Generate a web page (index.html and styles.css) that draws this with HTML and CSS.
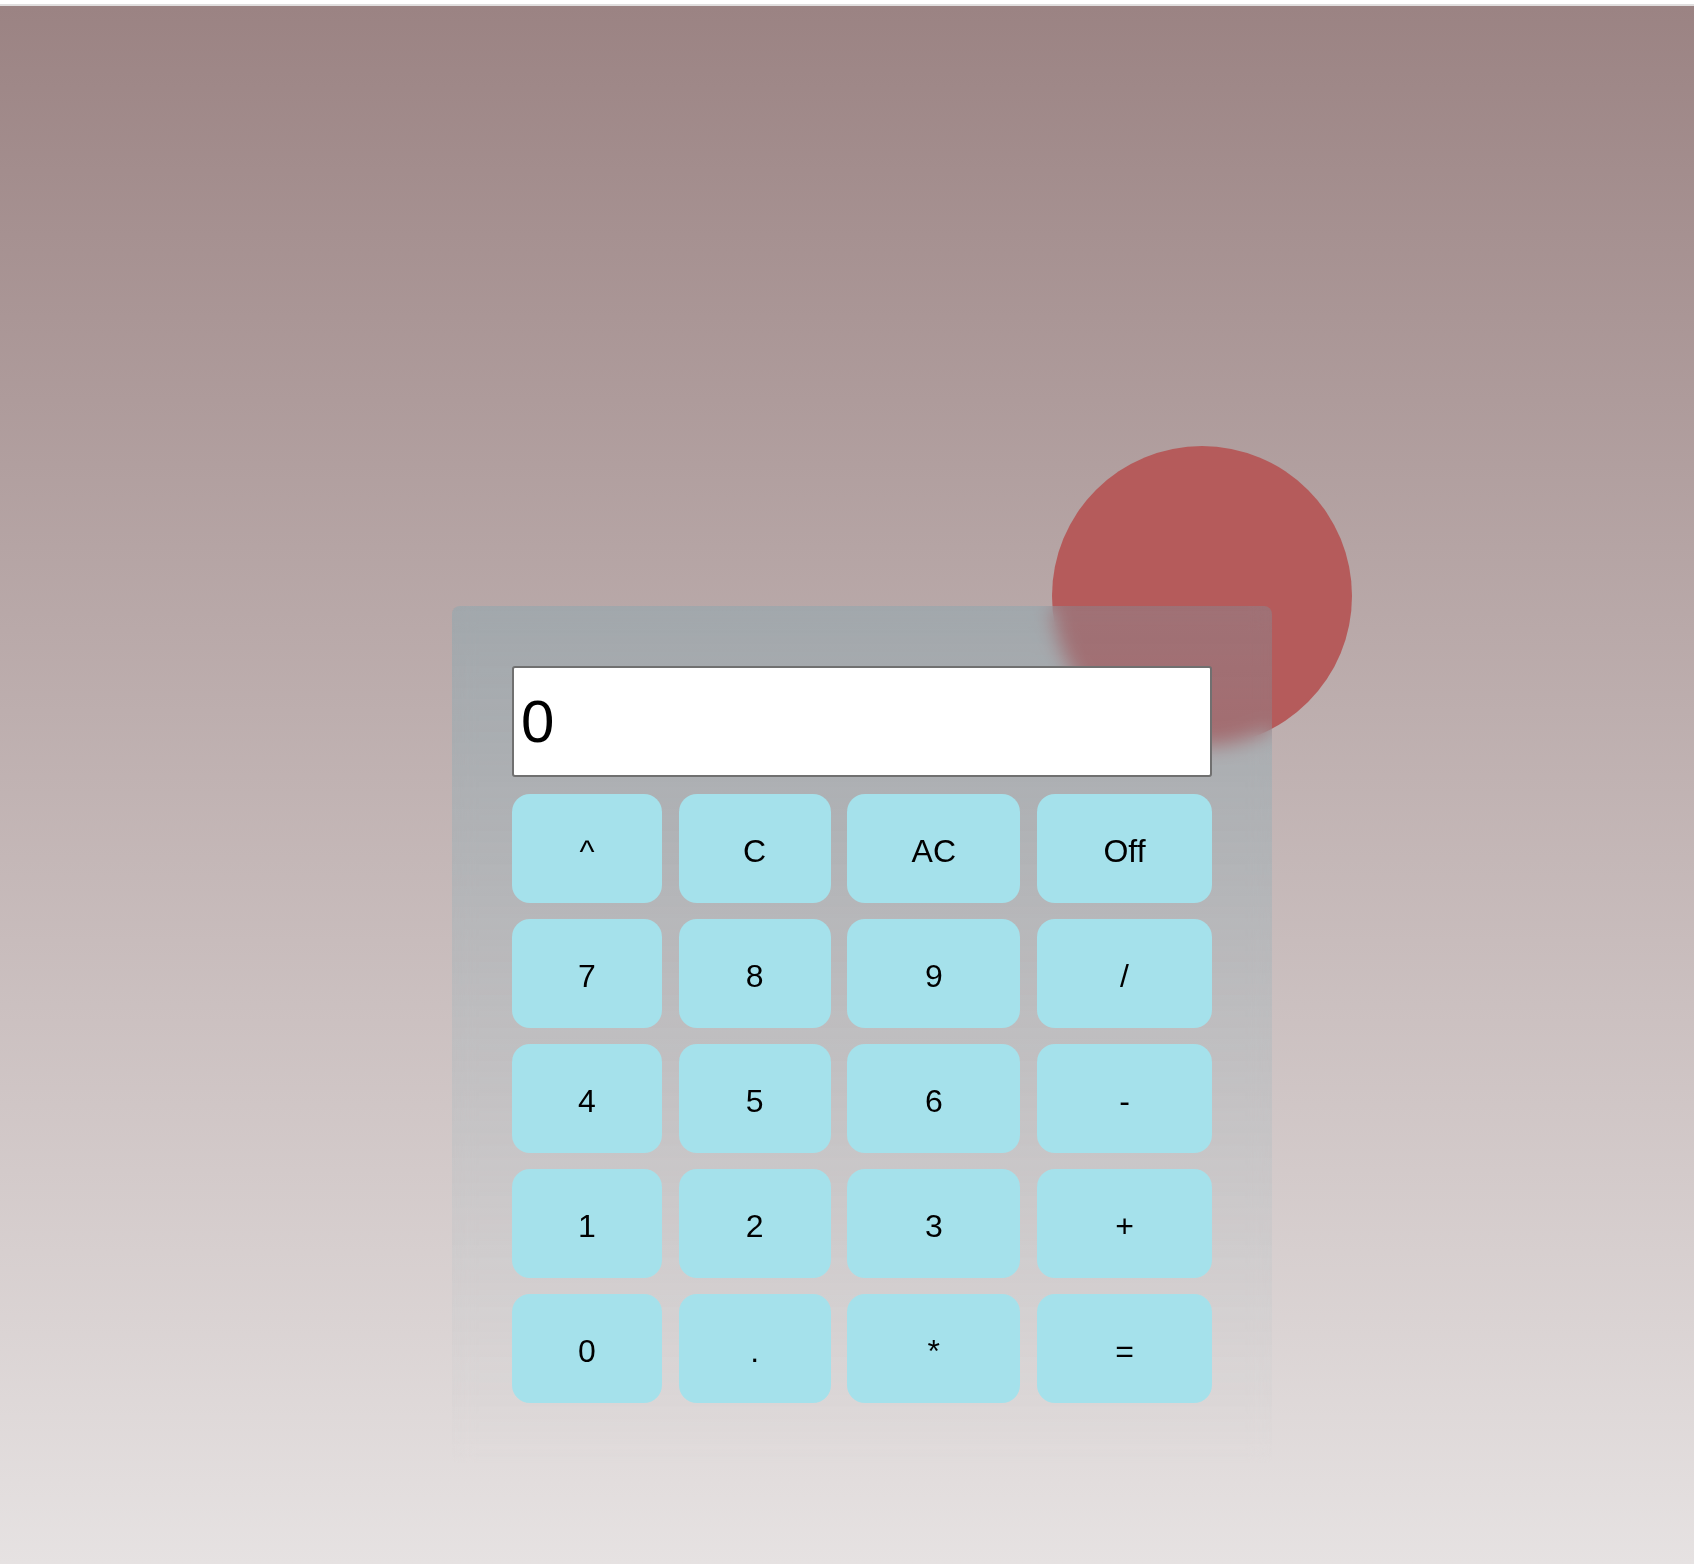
FILE: index.html
```html
<!DOCTYPE html>
<html lang="en">
<head>
<meta charset="utf-8">
<title>Calculator</title>
<link rel="stylesheet" href="styles.css">
</head>
<body>
<div class="topline"></div>
<main class="page">
  <div class="stage">
    <div class="orb"></div>
    <div class="calc">
      <div class="display">0</div>
      <div class="keys">
        <button class="key">^</button>
        <button class="key">C</button>
        <button class="key">AC</button>
        <button class="key">Off</button>
        <button class="key">7</button>
        <button class="key">8</button>
        <button class="key">9</button>
        <button class="key">/</button>
        <button class="key">4</button>
        <button class="key">5</button>
        <button class="key">6</button>
        <button class="key">-</button>
        <button class="key">1</button>
        <button class="key">2</button>
        <button class="key">3</button>
        <button class="key">+</button>
        <button class="key">0</button>
        <button class="key">.</button>
        <button class="key">*</button>
        <button class="key">=</button>
      </div>
    </div>
  </div>
</main>
</body>
</html>
```

FILE: styles.css
```css
html, body {
  margin: 0;
  padding: 0;
}
body {
  background: #ffffff;
  font-family: "Liberation Sans", Arial, sans-serif;
  overflow: hidden;
}
.topline {
  height: 4px;
  background: #ffffff;
  border-bottom: 2px solid #e0dede;
}
.page {
  height: 1558px;
  box-sizing: border-box;
  padding-top: 600px;
  padding-left: 452px;
  background: linear-gradient(180deg, #9b8383 0%, #e6e2e2 100%);
  overflow: hidden;
}
.stage {
  position: relative;
  width: 820px;
}
.orb {
  position: absolute;
  left: 600px;
  top: -160px;
  width: 300px;
  height: 300px;
  border-radius: 50%;
  background: #b55b5b;
}
.calc {
  position: relative;
  width: 820px;
  box-sizing: border-box;
  padding: 60px;
  border-radius: 8px;
  background: linear-gradient(180deg, rgba(108, 168, 183, 0.29) 0%, rgba(108, 168, 183, 0.12) 55%, rgba(108, 168, 183, 0) 100%);
  backdrop-filter: blur(10px);
  -webkit-backdrop-filter: blur(10px);
}
.display {
  height: 111px;
  box-sizing: border-box;
  border: 2px solid #707070;
  border-radius: 3px;
  background: #ffffff;
  display: flex;
  align-items: center;
  padding-left: 7px;
  font-size: 60px;
  color: #000;
  margin-bottom: 17px;
}
.keys {
  display: grid;
  grid-template-columns: 150px 152px 173px 175px;
  grid-auto-rows: 109px;
  column-gap: 16.67px;
  row-gap: 16px;
}
.key {
  border: none;
  border-radius: 18px;
  background: #a5e1eb;
  color: #000;
  font-family: "Liberation Sans", Arial, sans-serif;
  font-size: 32px;
  padding: 6px 0 0 0;
  margin: 0;
}
```
